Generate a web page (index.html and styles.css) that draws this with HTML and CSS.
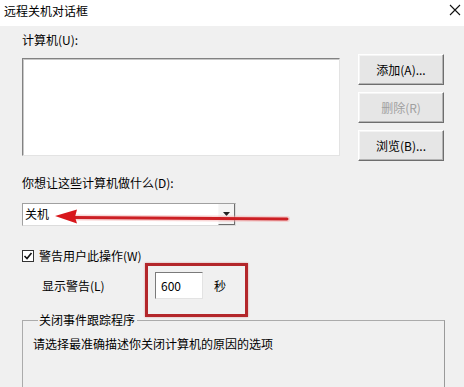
FILE: index.html
```html
<!DOCTYPE html>
<html>
<head>
<meta charset="UTF-8">
<title>远程关机对话框</title>
<link rel="stylesheet" href="styles.css">
</head>
<body>
<div class="dlg">
  <div class="titlebar">
    <span class="title">远程关机对话框</span>
    <svg class="close" width="12" height="12" viewBox="0 0 12 12"><path d="M1 1L11 11M11 1L1 11" stroke="#111" stroke-width="1.1" fill="none"/></svg>
  </div>
  <div class="body">
    <div class="top">
      <div class="left">
        <div class="lbl">计算机(U):</div>
        <div class="listbox"></div>
      </div>
      <div class="btns">
        <div class="btn">添加(A)...</div>
        <div class="btn off">删除(R)</div>
        <div class="btn">浏览(B)...</div>
      </div>
    </div>
    <div class="lbl q">你想让这些计算机做什么(D):</div>
    <div class="combo">
      <span class="combo-txt">关机</span>
      <span class="combo-btn"><svg width="7" height="4" viewBox="0 0 7 4"><path d="M0 0H7L3.5 4Z" fill="#222"/></svg></span>
    </div>
    <div class="chk-row">
      <svg class="chk" width="12" height="12" viewBox="0 0 12 12"><rect x="0.5" y="0.5" width="11" height="11" fill="#fff" stroke="#333"/><path d="M2.5 6L5 8.5L9.5 3" stroke="#111" stroke-width="1.6" fill="none"/></svg>
      <span>警告用户此操作(W)</span>
    </div>
    <div class="warn-row">
      <span class="warn-lbl">显示警告(L)</span>
      <div class="num">600</div>
      <span class="sec">秒</span>
    </div>
    <fieldset class="group">
      <legend>关闭事件跟踪程序</legend>
      <div class="hint">请选择最准确描述你关闭计算机的原因的选项</div>
    </fieldset>
  </div>
  <div class="mark-box"></div>
  <svg class="mark-arrow" width="464" height="387" viewBox="0 0 464 387">
    <path d="M74 217.5L287 219" stroke="#f4b0b0" stroke-width="6" stroke-linecap="round" fill="none" opacity="0.5"/>
    <path d="M74 217.5L287 219" stroke="#cc1f24" stroke-width="3" stroke-linecap="round" fill="none"/>
    <path d="M55 216L77 209.5L75 217L77 223.5Z" fill="#d8171c"/>
  </svg>
</div>
</body>
</html>
```

FILE: styles.css
```css
* {
	box-sizing: border-box;
}
html, body {
	margin: 0;
	padding: 0;
}
body {
	width: 464px;
	height: 387px;
	overflow: hidden;
	font-family: "Noto Sans CJK SC", "Noto Sans", sans-serif;
	font-size: 12px;
	line-height: 16px;
	color: #000000;
}
.dlg {
	position: relative;
	height: 387px;
	overflow: hidden;
	background: #F0F0F0;
}
.titlebar {
	height: 26px;
	background: #FFFFFF;
	display: flex;
	justify-content: space-between;
	align-items: flex-start;
	padding: 3px 3px 0 4px;
}
.close {
	margin-top: 1px;
}
.body {
	padding-left: 22px;
}
.top {
	display: grid;
	grid-template-columns: 318px 86px;
	column-gap: 18px;
}
.left {
	padding-top: 6px;
}
.listbox {
	margin-top: 10px;
	height: 98px;
	background: #FFFFFF;
	border: 1px solid;
	border-color: #828282 #E3E3E3 #E3E3E3 #828282;
	box-shadow: inset 1px 1px 0 #C8C8C8;
}
.btns {
	padding-top: 28px;
	display: flex;
	flex-direction: column;
	gap: 7px;
}
.btn {
	height: 31px;
	display: flex;
	align-items: center;
	justify-content: center;
	background: #E6E6E6;
	border: 1px solid;
	border-color: #FFFFFF #6E6E6E #6E6E6E #FFFFFF;
	box-shadow: inset -1px -1px 0 #B4B4B4, inset 1px 1px 0 #F4F4F4;
}
.btn.off {
	color: #A0A0A0;
}
.q {
	margin-top: 14px;
}
.combo {
	margin-top: 12px;
	width: 214px;
	height: 23px;
	display: flex;
	background: #FFFFFF;
	border: 1px solid;
	border-color: #A0A0A0 #DCDCDC #DCDCDC #A0A0A0;
}
.combo-txt {
	flex: 1;
	padding: 2px 0 0 2px;
}
.combo-btn {
	width: 17px;
	display: flex;
	align-items: center;
	justify-content: center;
	background: #F4F4F4;
	border-left: 1px solid #F8F8F8;
	border-right: 1px solid #6E6E6E;
	border-bottom: 1px solid #6E6E6E;
}
.chk-row {
	margin-top: 22px;
	display: flex;
	align-items: center;
	gap: 5px;
}
.warn-row {
	margin-top: 8px;
	padding-left: 20px;
	display: flex;
	align-items: center;
}
.warn-lbl {
	width: 113px;
}
.num {
	width: 48px;
	height: 27px;
	padding: 5px 0 0 5px;
	background: #FFFFFF;
	border: 1px solid;
	border-color: #7A7A7A #E3E3E3 #E3E3E3 #7A7A7A;
}
.sec {
	margin-left: 11px;
}
.group {
	margin: 13px 0 0 0;
	width: 423px;
	height: 96px;
	padding: 8px 10px 0 10px;
	border: 1px solid #ABABAB;
	border-right-color: #9A9A9A;
}
.group legend {
	margin-left: 5px;
	padding: 0 2px 0 1px;
	line-height: 16px;
}
.mark-box {
	position: absolute;
	left: 145px;
	top: 263px;
	width: 103px;
	height: 54px;
	border: 3px solid #B3262A;
	box-shadow: 0 0 2px rgba(200, 40, 40, 0.4);
}
.mark-arrow {
	position: absolute;
	left: 0;
	top: 0;
}
```
